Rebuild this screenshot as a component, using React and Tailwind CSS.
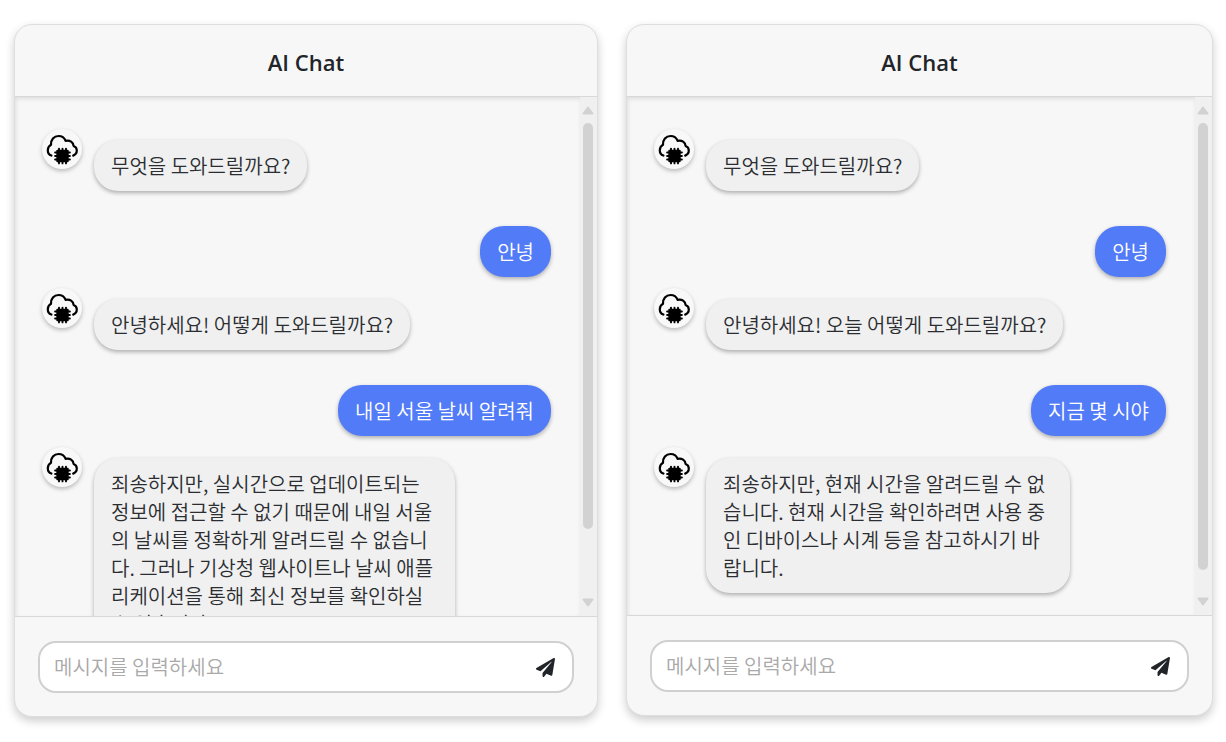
import React, { useId } from "react";
import { FaPaperPlane } from "react-icons/fa";

const LEFT = [
  { from: "bot", text: "무엇을 도와드릴까요?" },
  { from: "user", text: "안녕" },
  { from: "bot", text: "안녕하세요! 어떻게 도와드릴까요?" },
  { from: "user", text: "내일 서울 날씨 알려줘" },
  {
    from: "bot",
    text: "죄송하지만, 실시간으로 업데이트되는 정보에 접근할 수 없기 때문에 내일 서울의 날씨를 정확하게 알려드릴 수 없습니다. 그러나 기상청 웹사이트나 날씨 애플리케이션을 통해 최신 정보를 확인하실 수 있습니다.",
  },
];

const RIGHT = [
  { from: "bot", text: "무엇을 도와드릴까요?" },
  { from: "user", text: "안녕" },
  { from: "bot", text: "안녕하세요! 오늘 어떻게 도와드릴까요?" },
  { from: "user", text: "지금 몇 시야" },
  {
    from: "bot",
    text: "죄송하지만, 현재 시간을 알려드릴 수 없습니다. 현재 시간을 확인하려면 사용 중인 디바이스나 시계 등을 참고하시기 바랍니다.",
  },
];

function BotAvatar() {
  return (
    <span className="size-10 shrink-0 rounded-full bg-[#f8f8f8] shadow-[0_2px_4px_rgba(0,0,0,0.25)]">
      <svg viewBox="0 0 40 40" className="size-10" aria-hidden="true">
        <path
          d="M9.400 26.600C7 25.600 5.800 23.800 5.800 21.400c0-2.600 1.300-4.600 3.200-5.600C8.600 10.800 12 7 16.600 7c3.200 0 5.700 1.700 7 4.800 4.400-.9 7.700 1.600 8 5.200 2.200.8 3.200 2.600 3.200 4.600 0 2.400-1.400 4.200-3.600 5"
          fill="none"
          stroke="#000"
          strokeWidth="2.200"
          strokeLinecap="round"
          strokeLinejoin="round"
        />
        <rect x="14.300" y="20.800" width="12.400" height="12.400" rx="1" fill="#000" />
        <path
          d="M17 19.600v14.800M20.500 19.600v14.800M24 19.600v14.800M13.100 23.500h14.800M13.100 27h14.800M13.100 30.500h14.800"
          stroke="#000"
          strokeWidth="1.900"
          strokeLinecap="round"
        />
      </svg>
    </span>
  );
}

function Message({ from, text }) {
  if (from === "user") {
    return (
      <li className="mt-[35px] mb-[11px] flex justify-end">
        <p className="rounded-[24px] bg-[#527bf7] px-[17px] pt-3 pb-[11px] text-white shadow-[0_2px_4px_rgba(0,0,0,0.3)]">
          {text}
        </p>
      </li>
    );
  }
  return (
    <li className="flex items-start gap-3">
      <BotAvatar />
      <p className="mt-[11px] max-w-[71%] rounded-[24px] bg-[#f0f0f0] px-[17px] pt-3 pb-[11px] text-[#2b2d30] shadow-[0_2px_4px_rgba(0,0,0,0.3)]">
        {text}
      </p>
    </li>
  );
}

function ScrollTrack({ thumb }) {
  return (
    <div className="flex w-[17px] shrink-0 flex-col items-center bg-[#f0f0f0] py-[9px] pr-px" aria-hidden="true">
      <svg viewBox="0 0 12 9" className="h-[9px] w-3">
        <path d="M6 1.500L10.500 7.500h-9z" fill="#d2d2d2" stroke="#d2d2d2" strokeWidth="2" strokeLinejoin="round" />
      </svg>
      <div className="my-2 w-full flex-1 px-[3px]">
        <div className={"w-full rounded-full bg-[#d2d2d2] " + thumb} />
      </div>
      <svg viewBox="0 0 12 9" className="h-[9px] w-3">
        <path d="M6 7.500L1.500 1.500h9z" fill="#d2d2d2" stroke="#d2d2d2" strokeWidth="2" strokeLinejoin="round" />
      </svg>
    </div>
  );
}

function Chat({ messages, height, thumb }) {
  const id = useId();
  return (
    <section className="flex min-w-0 flex-col overflow-hidden rounded-[18px] border border-[#dedede] bg-[#f7f7f7] shadow-[0_4px_10px_rgba(0,0,0,0.2)]">
      <header className="border-b border-[#d8d8d8] pt-[23px] pb-5 text-center">
        <h2 className="font-['Open_Sans','Noto_Sans',sans-serif] text-[22px] leading-7 font-semibold text-[#212529]">
          AI Chat
        </h2>
      </header>
      <div className={"flex " + height}>
        <ul className="min-w-0 flex-1 overflow-y-auto pt-8 pr-[29px] pb-6 pl-[27px] font-[350] shadow-[inset_1px_2px_4px_rgba(0,0,0,0.1)] [scrollbar-width:none]">
          {messages.map((m, i) => (
            <Message key={i} {...m} />
          ))}
        </ul>
        <ScrollTrack thumb={thumb} />
      </div>
      <form
        className="border-t border-[#d8d8d8] px-[23px] pt-6 pb-[23px]"
        onSubmit={(e) => e.preventDefault()}
      >
        <div className="flex items-center rounded-[18px] border-2 border-[#d0d0d0] bg-white py-2 pr-[17px] pl-[14px]">
          <label htmlFor={id} className="sr-only">
            메시지
          </label>
          <input
            id={id}
            type="text"
            placeholder="메시지를 입력하세요"
            className="h-8 min-w-0 flex-1 bg-transparent leading-8 font-[350] text-[#212529] outline-none placeholder:text-[#a9a9a9]"
          />
          <button type="submit" aria-label="전송" className="text-[#212529]">
            <FaPaperPlane className="size-[19px]" />
          </button>
        </div>
      </form>
    </section>
  );
}

export default function App() {
  return (
    <main className="grid grid-cols-[584fr_587fr] items-start gap-7 bg-white pt-6 pr-[13px] pb-6 pl-[14px] font-['Noto_Sans_CJK_KR',sans-serif] text-[20px] leading-7">
      <Chat messages={LEFT} height="h-[519px]" thumb="h-[87%]" />
      <Chat messages={RIGHT} height="h-[518px]" thumb="h-[96%]" />
    </main>
  );
}
